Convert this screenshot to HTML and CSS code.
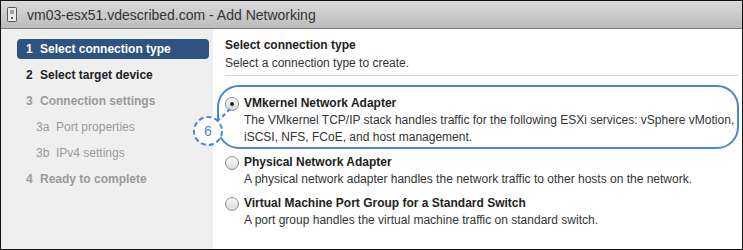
FILE: index.html
```html
<!DOCTYPE html>
<html lang="en">
<head>
    <meta charset="UTF-8">
    <title>Add Networking</title>
    <link rel="stylesheet" href="styles.css">
</head>
<body>
    <div class="dialog">
        <!-- Title bar -->
        <div class="title-bar">
            <svg class="host-icon" width="10" height="15" viewBox="0 0 10 15">
                <rect x="0.5" y="0.5" width="9" height="14" rx="1" fill="#e8e8e8" stroke="#555"/>
                <line x1="3" y1="4" x2="7" y2="4" stroke="#555"/>
                <line x1="3" y1="6" x2="7" y2="6" stroke="#555"/>
                <rect x="4" y="10" width="2" height="2" fill="#555"/>
            </svg>
            <span>vm03-esx51.vdescribed.com - Add Networking</span>
        </div>

        <div class="dialog-body">
            <!-- Wizard steps -->
            <ul class="steps">
                <li class="step active"><b>1</b> Select connection type</li>
                <li class="step"><b>2</b> Select target device</li>
                <li class="step disabled"><b>3</b> Connection settings</li>
                <li class="step sub disabled">3a&nbsp; Port properties</li>
                <li class="step sub disabled">3b&nbsp; IPv4 settings</li>
                <li class="step disabled"><b>4</b> Ready to complete</li>
            </ul>

            <!-- Page content -->
            <div class="content">
                <h3>Select connection type</h3>
                <p class="intro">Select a connection type to create.</p>

                <div class="options">
                    <label class="option">
                        <span class="radio checked"></span>
                        <span class="option-text">
                            <span class="option-title">VMkernel Network Adapter</span>
                            <span class="option-desc">The VMkernel TCP/IP stack handles traffic for the following ESXi services: vSphere vMotion,<br>iSCSI, NFS, FCoE, and host management.</span>
                        </span>
                    </label>
                    <label class="option">
                        <span class="radio"></span>
                        <span class="option-text">
                            <span class="option-title">Physical Network Adapter</span>
                            <span class="option-desc">A physical network adapter handles the network traffic to other hosts on the network.</span>
                        </span>
                    </label>
                    <label class="option">
                        <span class="radio"></span>
                        <span class="option-text">
                            <span class="option-title">Virtual Machine Port Group for a Standard Switch</span>
                            <span class="option-desc">A port group handles the virtual machine traffic on standard switch.</span>
                        </span>
                    </label>
                </div>
            </div>
        </div>

        <!-- Callout overlay -->
        <div class="callout-box"></div>
        <svg class="callout-marker" width="60" height="60" viewBox="0 0 60 60">
            <path d="M22 37 C30 30 40 24 48 13" fill="none" stroke="#4a86d4" stroke-width="2" stroke-dasharray="4 3"/>
            <circle cx="24" cy="38" r="14" fill="#fff" stroke="#4a86d4" stroke-width="2" stroke-dasharray="5 3"/>
            <text x="24" y="43" text-anchor="middle" font-family="Liberation Sans, Arial, sans-serif" font-size="14" fill="#4a86d4">6</text>
        </svg>
    </div>
</body>
</html>
```

FILE: styles.css
```css
body {
    margin: 0;
    padding: 0;
    font-family: "Liberation Sans", Arial, sans-serif;
    font-size: 12px;
    color: #333;
}

.dialog {
    position: relative;
    width: 743px;
    height: 250px;
    box-sizing: border-box;
    border: 1px solid #111;
    background: #fff;
    display: flex;
    flex-direction: column;
    overflow: hidden;
}

/* Title bar */
.title-bar {
    height: 27px;
    display: flex;
    align-items: center;
    padding-left: 6px;
    background: linear-gradient(#dadada, #bcbcbc);
    border-bottom: 1px solid #7c7c7c;
    font-size: 14px;
    color: #333;
}

.host-icon {
    margin-right: 10px;
}

.dialog-body {
    flex-grow: 1;
    display: flex;
}

/* Steps sidebar */
.steps {
    width: 212px;
    flex-shrink: 0;
    background-color: #efefef;
    list-style: none;
    margin: 0;
    padding: 10px 4px 0 16px;
    box-sizing: border-box;
}

.step {
    height: 20px;
    line-height: 20px;
    margin-bottom: 6px;
    padding-left: 9px;
    font-weight: bold;
    color: #222;
    border-radius: 4px;
    white-space: nowrap;
}

.step b {
    margin-right: 4px;
}

.step.active {
    background-color: #2e5381;
    color: #fff;
}

.step.disabled {
    color: #9a9a9a;
}

.step.sub {
    font-weight: normal;
    padding-left: 19px;
}

/* Content */
.content {
    flex-grow: 1;
    padding: 7px 4px 0 12px;
}

.content h3 {
    margin: 0;
    font-size: 12px;
    font-weight: bold;
    color: #222;
    line-height: 18px;
}

.intro {
    margin: 0;
    line-height: 18px;
    padding-bottom: 3px;
    border-bottom: 1px solid #d4d4d4;
}

.options {
    padding-top: 19px;
}

.option {
    display: flex;
    align-items: flex-start;
    margin-bottom: 7px;
}

.option:first-child {
    margin-bottom: 8px;
}

.radio {
    width: 12px;
    height: 12px;
    margin: 2px 5px 0 0;
    border: 1px solid #8f8f8f;
    border-radius: 50%;
    background: linear-gradient(#fafafa, #dcdcdc);
    position: relative;
    flex-shrink: 0;
}

.radio.checked::after {
    content: "";
    position: absolute;
    left: 4px;
    top: 4px;
    width: 4px;
    height: 4px;
    border-radius: 50%;
    background: #222;
}

.option-text {
    display: flex;
    flex-direction: column;
    white-space: nowrap;
}

.option-title {
    font-weight: bold;
    color: #222;
    line-height: 17px;
}

.option-desc {
    line-height: 17px;
}

/* Callout */
.callout-box {
    position: absolute;
    left: 216px;
    top: 84px;
    width: 518px;
    height: 60px;
    border: 2px solid #4a86d4;
    border-radius: 22px;
    pointer-events: none;
}

.callout-marker {
    position: absolute;
    left: 183px;
    top: 92px;
}
```
